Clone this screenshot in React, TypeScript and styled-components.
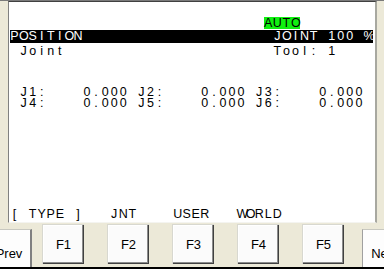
import React from "react";
import styled, { createGlobalStyle } from "styled-components";

const CELL = 9.075;
const COLS = 40;

const Global = createGlobalStyle`
  html, body { margin: 0; padding: 0; background: #ece9d8; overflow: hidden; }
  #root { width: 384px; height: 269px; }
`;

const Frame = styled.div`
  width: 384px;
  height: 269px;
  box-sizing: border-box;
  display: flex;
  flex-direction: column;
  background: #ece9d8;
  border-top: 1px solid #7a7a7a;
  border-bottom: 2px solid #000;
  font-family: "Liberation Sans", Arial, sans-serif;
  overflow: hidden;
`;

const ScreenWrap = styled.div`
  height: 222px;
  padding: 0 7px 0 8px;
  box-sizing: border-box;
  flex: none;
`;

const Screen = styled.div`
  height: 100%;
  box-sizing: border-box;
  background: #fff;
  border-top: 1px solid #404040;
  border-left: 1px solid #808080;
  border-right: 2px solid #a8a8a0;
  border-bottom: 1px solid #f4f4f0;
  padding: 15px 0 0 1px;
  display: flex;
  flex-direction: column;
`;

const Row = styled.div<{ $mt?: number; $lh?: number; $bar?: boolean }>`
  display: grid;
  grid-template-columns: repeat(${COLS}, ${CELL}px);
  margin-top: ${(p) => p.$mt ?? 0}px;
  height: ${(p) => p.$lh ?? 13}px;
  line-height: ${(p) => p.$lh ?? 13}px;
  font-size: 12.5px;
  color: ${(p) => (p.$bar ? "#fff" : "#000")};
  background: ${(p) => (p.$bar ? "#000" : "transparent")};
  width: ${COLS * CELL}px;
`;

const Cell = styled.span<{ $hl?: boolean }>`
  display: block;
  text-align: center;
  white-space: pre;
  background: ${(p) => (p.$hl ? "#10f010" : "transparent")};
`;

type LineProps = {
  text: string;
  mt?: number;
  lh?: number;
  bar?: boolean;
  hl?: [number, number];
};

const Line = ({ text, mt, lh, bar, hl }: LineProps) => {
  const chars = text.padEnd(COLS, " ").slice(0, COLS).split("");
  return (
    <Row $mt={mt} $lh={lh} $bar={bar}>
      {chars.map((c, i) => (
        <Cell key={i} $hl={!!hl && i >= hl[0] && i <= hl[1]}>
          {c}
        </Cell>
      ))}
    </Row>
  );
};

const ButtonBar = styled.div`
  flex: 1;
  display: flex;
  align-items: flex-start;
  padding-top: 1px;
`;

const Tab = styled.div<{ $side: "left" | "right" }>`
  flex: none;
  width: 44px;
  height: 41px;
  margin-top: 5px;
  margin-left: ${(p) => (p.$side === "left" ? "-12px" : "auto")};
  margin-right: ${(p) => (p.$side === "right" ? "-22px" : "0")};
  box-sizing: border-box;
  background: #fdfdfd;
  border-top: 1px solid #c8c8c0;
  border-left: ${(p) => (p.$side === "right" ? "1px solid #a0a0a0" : "none")};
  border-right: ${(p) => (p.$side === "left" ? "2px solid #808080" : "none")};
  display: flex;
  align-items: center;
  justify-content: center;
  padding-top: 6px;
  font-size: 13px;
  color: #000;
`;

const Keys = styled.div`
  display: flex;
  gap: 23px;
  margin-left: 10px;
`;

const FKey = styled.div`
  width: 42px;
  height: 40px;
  box-sizing: border-box;
  background: #fbfbfb;
  border-top: 1px solid #d8d8d0;
  border-left: 1px solid #d8d8d0;
  box-shadow: inset -1px -1px #404040, inset -2px -2px #8c8c8c, inset 1px 1px #ffffff;
  display: flex;
  align-items: center;
  justify-content: center;
  font-size: 13px;
  color: #000;
  padding-bottom: 1px;
`;

export default function App() {
  return (
    <>
      <Global />
      <Frame>
        <ScreenWrap>
          <Screen>
            <Line text="                            AUTO" lh={12} hl={[28, 31]} />
            <Line text="POSITION                     JOINT 100 %" mt={1} bar />
            <Line text=" Joint                       Tool: 1" mt={2} />
            <Line text=" J1:    0.000 J2:    0.000 J3:    0.000" mt={29} lh={11} />
            <Line text=" J4:    0.000 J5:    0.000 J6:    0.000" lh={11} />
            <Line text="[ TYPE ]   JNT    USER   WORLD" mt={99} />
          </Screen>
        </ScreenWrap>
        <ButtonBar>
          <Tab $side="left">Prev</Tab>
          <Keys>
            <FKey>F1</FKey>
            <FKey>F2</FKey>
            <FKey>F3</FKey>
            <FKey>F4</FKey>
            <FKey>F5</FKey>
          </Keys>
          <Tab $side="right">Next</Tab>
        </ButtonBar>
      </Frame>
    </>
  );
}
